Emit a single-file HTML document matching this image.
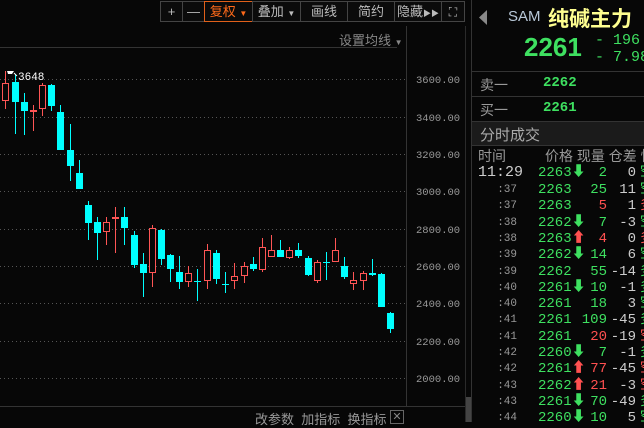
<!DOCTYPE html>
<html><head><meta charset="utf-8"><style>
html,body{margin:0;padding:0;background:#070707;width:644px;height:422px;overflow:hidden;font-family:"Liberation Sans","Noto Sans CJK SC",sans-serif;}
.a{position:absolute;white-space:nowrap;}
.btn{position:absolute;top:1px;height:21px;border:1px solid #444;box-sizing:border-box;color:#bbb;font-size:13px;line-height:20px;text-align:center;background:#0b0b0b;}
.m{font-family:"Liberation Mono","Noto Sans CJK SC",monospace;}
.g{color:#3ee060}.r{color:#ff5050}.w{color:#ccc}
.row{position:absolute;left:472px;width:172px;height:16px;font-size:14px;line-height:16px;}
</style></head><body>
<svg class="a" style="left:0;top:0" width="644" height="422">
<g stroke="#555" stroke-dasharray="1,3">
<line x1="0" y1="79.5" x2="406" y2="79.5"/><line x1="0" y1="117.5" x2="406" y2="117.5"/><line x1="0" y1="154.5" x2="406" y2="154.5"/><line x1="0" y1="191.5" x2="406" y2="191.5"/><line x1="0" y1="229.5" x2="406" y2="229.5"/><line x1="0" y1="266.5" x2="406" y2="266.5"/><line x1="0" y1="303.5" x2="406" y2="303.5"/><line x1="0" y1="341.5" x2="406" y2="341.5"/><line x1="0" y1="378.5" x2="406" y2="378.5"/>
</g>
<line x1="0" y1="47.5" x2="397" y2="47.5" stroke="#333"/>
<line x1="406.5" y1="26" x2="406.5" y2="406" stroke="#333"/>
<line x1="0" y1="406.5" x2="465" y2="406.5" stroke="#333"/>
<line x1="465.5" y1="26" x2="465.5" y2="422" stroke="#2a2a2a"/>
<rect x="466" y="397" width="5" height="25" fill="#444"/>
<line x1="471.5" y1="0" x2="471.5" y2="422" stroke="#333"/>
<g fill="#00ffff" stroke="#00ffff">
<line x1="15.5" y1="74" x2="15.5" y2="134"/><rect x="12" y="82" width="7" height="20" stroke="none"/>
<line x1="24.5" y1="93" x2="24.5" y2="135"/><rect x="21" y="102" width="7" height="9" stroke="none"/>
<line x1="51.5" y1="84" x2="51.5" y2="111"/><rect x="48" y="85" width="7" height="21" stroke="none"/>
<line x1="60.5" y1="105" x2="60.5" y2="150"/><rect x="57" y="112" width="7" height="38" stroke="none"/>
<line x1="70.5" y1="124" x2="70.5" y2="181"/><rect x="67" y="150" width="7" height="16" stroke="none"/>
<line x1="79.5" y1="160" x2="79.5" y2="189"/><rect x="76" y="173" width="7" height="16" stroke="none"/>
<line x1="88.5" y1="201" x2="88.5" y2="240"/><rect x="85" y="205" width="7" height="18" stroke="none"/>
<line x1="97.5" y1="217" x2="97.5" y2="260"/><rect x="94" y="222" width="7" height="11" stroke="none"/>
<line x1="124.5" y1="207" x2="124.5" y2="245"/><rect x="121" y="217" width="7" height="11" stroke="none"/>
<line x1="134.5" y1="231" x2="134.5" y2="268"/><rect x="131" y="235" width="7" height="30" stroke="none"/>
<line x1="143.5" y1="253" x2="143.5" y2="297"/><rect x="140" y="264" width="7" height="9" stroke="none"/>
<line x1="161.5" y1="229" x2="161.5" y2="265"/><rect x="158" y="230" width="7" height="29" stroke="none"/>
<line x1="170.5" y1="254" x2="170.5" y2="282"/><rect x="167" y="255" width="7" height="14" stroke="none"/>
<line x1="179.5" y1="256" x2="179.5" y2="289"/><rect x="176" y="272" width="7" height="10" stroke="none"/>
<line x1="197.5" y1="269" x2="197.5" y2="301"/><rect x="194" y="281" width="7" height="1" stroke="none"/>
<line x1="216.5" y1="250" x2="216.5" y2="284"/><rect x="213" y="253" width="7" height="26" stroke="none"/>
<line x1="225.5" y1="272" x2="225.5" y2="293"/><rect x="222" y="284" width="7" height="1" stroke="none"/>
<line x1="253.5" y1="257" x2="253.5" y2="271"/><rect x="250" y="264" width="7" height="5" stroke="none"/>
<line x1="280.5" y1="240" x2="280.5" y2="257"/><rect x="277" y="250" width="7" height="7" stroke="none"/>
<line x1="298.5" y1="243" x2="298.5" y2="258"/><rect x="295" y="250" width="7" height="6" stroke="none"/>
<line x1="308.5" y1="256" x2="308.5" y2="276"/><rect x="305" y="258" width="7" height="17" stroke="none"/>
<line x1="326.5" y1="252" x2="326.5" y2="280"/><rect x="323" y="262" width="7" height="1" stroke="none"/>
<line x1="344.5" y1="257" x2="344.5" y2="279"/><rect x="341" y="266" width="7" height="11" stroke="none"/>
<line x1="372.5" y1="259" x2="372.5" y2="276"/><rect x="369" y="273" width="7" height="2" stroke="none"/>
<line x1="381.5" y1="273" x2="381.5" y2="307"/><rect x="378" y="274" width="7" height="33" stroke="none"/>
<line x1="390.5" y1="312" x2="390.5" y2="333"/><rect x="387" y="313" width="7" height="16" stroke="none"/>
</g>
<g stroke="#ff5555" fill="none">
<line x1="5.5" y1="71" x2="5.5" y2="109"/><rect x="2.5" y="83.5" width="6" height="17" fill="#070707"/>
<line x1="33.5" y1="105" x2="33.5" y2="131"/><rect x="30" y="110" width="7" height="2" fill="#ff5555" stroke="none"/>
<line x1="42.5" y1="83" x2="42.5" y2="116"/><rect x="39.5" y="85.5" width="6" height="23" fill="#070707"/>
<line x1="106.5" y1="217" x2="106.5" y2="245"/><rect x="103.5" y="222.5" width="6" height="9" fill="#070707"/>
<line x1="115.5" y1="207" x2="115.5" y2="253"/><rect x="112" y="217" width="7" height="2" fill="#ff5555" stroke="none"/>
<line x1="152.5" y1="225" x2="152.5" y2="287"/><rect x="149.5" y="228.5" width="6" height="44" fill="#070707"/>
<line x1="188.5" y1="266" x2="188.5" y2="287"/><rect x="185.5" y="273.5" width="6" height="8" fill="#070707"/>
<line x1="207.5" y1="244" x2="207.5" y2="289"/><rect x="204.5" y="250.5" width="6" height="30" fill="#070707"/>
<line x1="234.5" y1="263" x2="234.5" y2="289"/><rect x="231.5" y="276.5" width="6" height="4" fill="#070707"/>
<line x1="244.5" y1="262" x2="244.5" y2="283"/><rect x="241.5" y="266.5" width="6" height="9" fill="#070707"/>
<line x1="262.5" y1="238" x2="262.5" y2="272"/><rect x="259.5" y="247.5" width="6" height="22" fill="#070707"/>
<line x1="271.5" y1="235" x2="271.5" y2="257"/><rect x="268.5" y="250.5" width="6" height="6" fill="#070707"/>
<line x1="289.5" y1="247" x2="289.5" y2="259"/><rect x="286.5" y="250.5" width="6" height="7" fill="#070707"/>
<line x1="317.5" y1="260" x2="317.5" y2="283"/><rect x="314.5" y="262.5" width="6" height="18" fill="#070707"/>
<line x1="335.5" y1="238" x2="335.5" y2="262"/><rect x="332.5" y="250.5" width="6" height="11" fill="#070707"/>
<line x1="353.5" y1="272" x2="353.5" y2="290"/><rect x="350.5" y="280.5" width="6" height="3" fill="#070707"/>
<line x1="363.5" y1="271" x2="363.5" y2="290"/><rect x="360.5" y="273.5" width="6" height="7" fill="#070707"/>
</g>
<path d="M7 71 L14 71 L12 74 L8 74 Z" fill="#fff"/><line x1="14" y1="73" x2="17" y2="76" stroke="#fff"/>
<text x="18" y="80" fill="#fff" font-family="Liberation Mono" font-size="11">3648</text>
<g fill="#999" font-family="Liberation Mono" font-size="10.5">
<text x="416" y="83">3600.00</text><text x="416" y="121">3400.00</text><text x="416" y="158">3200.00</text><text x="416" y="195">3000.00</text><text x="416" y="233">2800.00</text><text x="416" y="270">2600.00</text><text x="416" y="307">2400.00</text><text x="416" y="345">2200.00</text><text x="416" y="382">2000.00</text>
</g>
<line x1="472" y1="71.5" x2="644" y2="71.5" stroke="#333"/>
<line x1="472" y1="96.5" x2="644" y2="96.5" stroke="#333"/>
<rect x="472" y="121" width="172" height="24" fill="#1b1b1b"/>
<line x1="472" y1="121.5" x2="644" y2="121.5" stroke="#333"/>
<line x1="472" y1="145.5" x2="644" y2="145.5" stroke="#333"/>
<path d="M487 10 L479 17.5 L487 25 Z" fill="#888"/>
</svg>
<div class="btn" style="left:160px;width:23px;">+</div>
<div class="btn" style="left:182px;width:23px;">—</div>
<div class="btn" style="left:204px;width:49px;border-color:#e0601a;color:#ff6a1a;">复权 <span style="font-size:8px">▼</span></div>
<div class="btn" style="left:252px;width:49px;">叠加 <span style="font-size:8px">▼</span></div>
<div class="btn" style="left:300px;width:48px;">画线</div>
<div class="btn" style="left:347px;width:48px;">简约</div>
<div class="btn" style="left:394px;width:48px;">隐藏<span style="font-size:8px">▶▶</span></div>
<div class="btn" style="left:441px;width:24px;font-size:12px;">⛶</div>
<div class="a" style="left:339px;top:30px;font-size:13px;color:#888;">设置均线 <span style="font-size:8px">▼</span></div>
<div class="a" style="left:255px;top:409px;font-size:13px;color:#999;">改参数 &nbsp;加指标 &nbsp;换指标</div>
<div class="a" style="left:390px;top:410px;width:12px;height:12px;border:1px solid #666;color:#888;font-size:11px;line-height:12px;text-align:center;">✕</div>
<div class="a" style="left:508px;top:8px;font-size:15px;color:#b8c8d8;">SAM</div>
<div class="a" style="left:548px;top:3px;font-size:21px;color:#ffff90;font-weight:bold;">纯碱主力</div>
<div class="a g" style="left:524px;top:32px;font-size:26px;font-weight:bold;">2261</div>
<div class="a g m" style="left:595px;top:32px;font-size:15px;">- 196</div>
<div class="a g m" style="left:595px;top:49px;font-size:15px;">- 7.98%</div>
<div class="a" style="left:480px;top:75px;font-size:14px;color:#999;">卖一</div>
<div class="a g m" style="left:543px;top:75px;font-size:14px;font-weight:bold;">2262</div>
<div class="a" style="left:480px;top:100px;font-size:14px;color:#999;">买一</div>
<div class="a g m" style="left:543px;top:100px;font-size:14px;font-weight:bold;">2261</div>
<div class="a" style="left:480px;top:124px;font-size:15px;color:#aaa;">分时成交</div>
<div class="a" style="left:478px;top:146px;font-size:14px;color:#999;">时间</div>
<div class="a" style="left:545px;top:146px;font-size:14px;color:#999;">价格 现量 仓差 性</div>
<div id="rows"></div>
<div class="row m" style="top:165px"><span class="a w" style="left:6px;font-size:15px;">11:29</span><span class="a g" style="left:66px">2263⬇</span><span class="a g" style="right:37px">2</span><span class="a w" style="right:8px">0</span><span class="a g" style="left:168px">空</span></div>
<div class="row m" style="top:182px"><span class="a" style="right:127px;font-size:11px;color:#999">:37</span><span class="a g" style="left:66px">2263</span><span class="a g" style="right:37px">25</span><span class="a w" style="right:8px">11</span><span class="a g" style="left:168px">空</span></div>
<div class="row m" style="top:198px"><span class="a" style="right:127px;font-size:11px;color:#999">:37</span><span class="a g" style="left:66px">2263</span><span class="a r" style="right:37px">5</span><span class="a w" style="right:8px">1</span><span class="a r" style="left:168px">多</span></div>
<div class="row m" style="top:215px"><span class="a" style="right:127px;font-size:11px;color:#999">:38</span><span class="a g" style="left:66px">2262⬇</span><span class="a g" style="right:37px">7</span><span class="a w" style="right:8px">-3</span><span class="a g" style="left:168px">空</span></div>
<div class="row m" style="top:231px"><span class="a" style="right:127px;font-size:11px;color:#999">:38</span><span class="a g" style="left:66px">2263<span class="r">⬆</span></span><span class="a r" style="right:37px">4</span><span class="a w" style="right:8px">0</span><span class="a r" style="left:168px">多</span></div>
<div class="row m" style="top:247px"><span class="a" style="right:127px;font-size:11px;color:#999">:39</span><span class="a g" style="left:66px">2262⬇</span><span class="a g" style="right:37px">14</span><span class="a w" style="right:8px">6</span><span class="a g" style="left:168px">空</span></div>
<div class="row m" style="top:264px"><span class="a" style="right:127px;font-size:11px;color:#999">:39</span><span class="a g" style="left:66px">2262</span><span class="a g" style="right:37px">55</span><span class="a w" style="right:8px">-14</span><span class="a g" style="left:168px">多</span></div>
<div class="row m" style="top:280px"><span class="a" style="right:127px;font-size:11px;color:#999">:40</span><span class="a g" style="left:66px">2261⬇</span><span class="a g" style="right:37px">10</span><span class="a w" style="right:8px">-1</span><span class="a g" style="left:168px">多</span></div>
<div class="row m" style="top:296px"><span class="a" style="right:127px;font-size:11px;color:#999">:40</span><span class="a g" style="left:66px">2261</span><span class="a g" style="right:37px">18</span><span class="a w" style="right:8px">3</span><span class="a g" style="left:168px">空</span></div>
<div class="row m" style="top:312px"><span class="a" style="right:127px;font-size:11px;color:#999">:41</span><span class="a g" style="left:66px">2261</span><span class="a g" style="right:37px">109</span><span class="a w" style="right:8px">-45</span><span class="a g" style="left:168px">多</span></div>
<div class="row m" style="top:329px"><span class="a" style="right:127px;font-size:11px;color:#999">:41</span><span class="a g" style="left:66px">2261</span><span class="a r" style="right:37px">20</span><span class="a w" style="right:8px">-19</span><span class="a r" style="left:168px">空</span></div>
<div class="row m" style="top:345px"><span class="a" style="right:127px;font-size:11px;color:#999">:42</span><span class="a g" style="left:66px">2260⬇</span><span class="a g" style="right:37px">7</span><span class="a w" style="right:8px">-1</span><span class="a g" style="left:168px">多</span></div>
<div class="row m" style="top:361px"><span class="a" style="right:127px;font-size:11px;color:#999">:42</span><span class="a g" style="left:66px">2261<span class="r">⬆</span></span><span class="a r" style="right:37px">77</span><span class="a w" style="right:8px">-45</span><span class="a r" style="left:168px">空</span></div>
<div class="row m" style="top:378px"><span class="a" style="right:127px;font-size:11px;color:#999">:43</span><span class="a g" style="left:66px">2262<span class="r">⬆</span></span><span class="a r" style="right:37px">21</span><span class="a w" style="right:8px">-3</span><span class="a r" style="left:168px">空</span></div>
<div class="row m" style="top:394px"><span class="a" style="right:127px;font-size:11px;color:#999">:43</span><span class="a g" style="left:66px">2261⬇</span><span class="a g" style="right:37px">70</span><span class="a w" style="right:8px">-49</span><span class="a g" style="left:168px">多</span></div>
<div class="row m" style="top:410px"><span class="a" style="right:127px;font-size:11px;color:#999">:44</span><span class="a g" style="left:66px">2260⬇</span><span class="a g" style="right:37px">10</span><span class="a w" style="right:8px">5</span><span class="a g" style="left:168px">空</span></div>
</body></html>
